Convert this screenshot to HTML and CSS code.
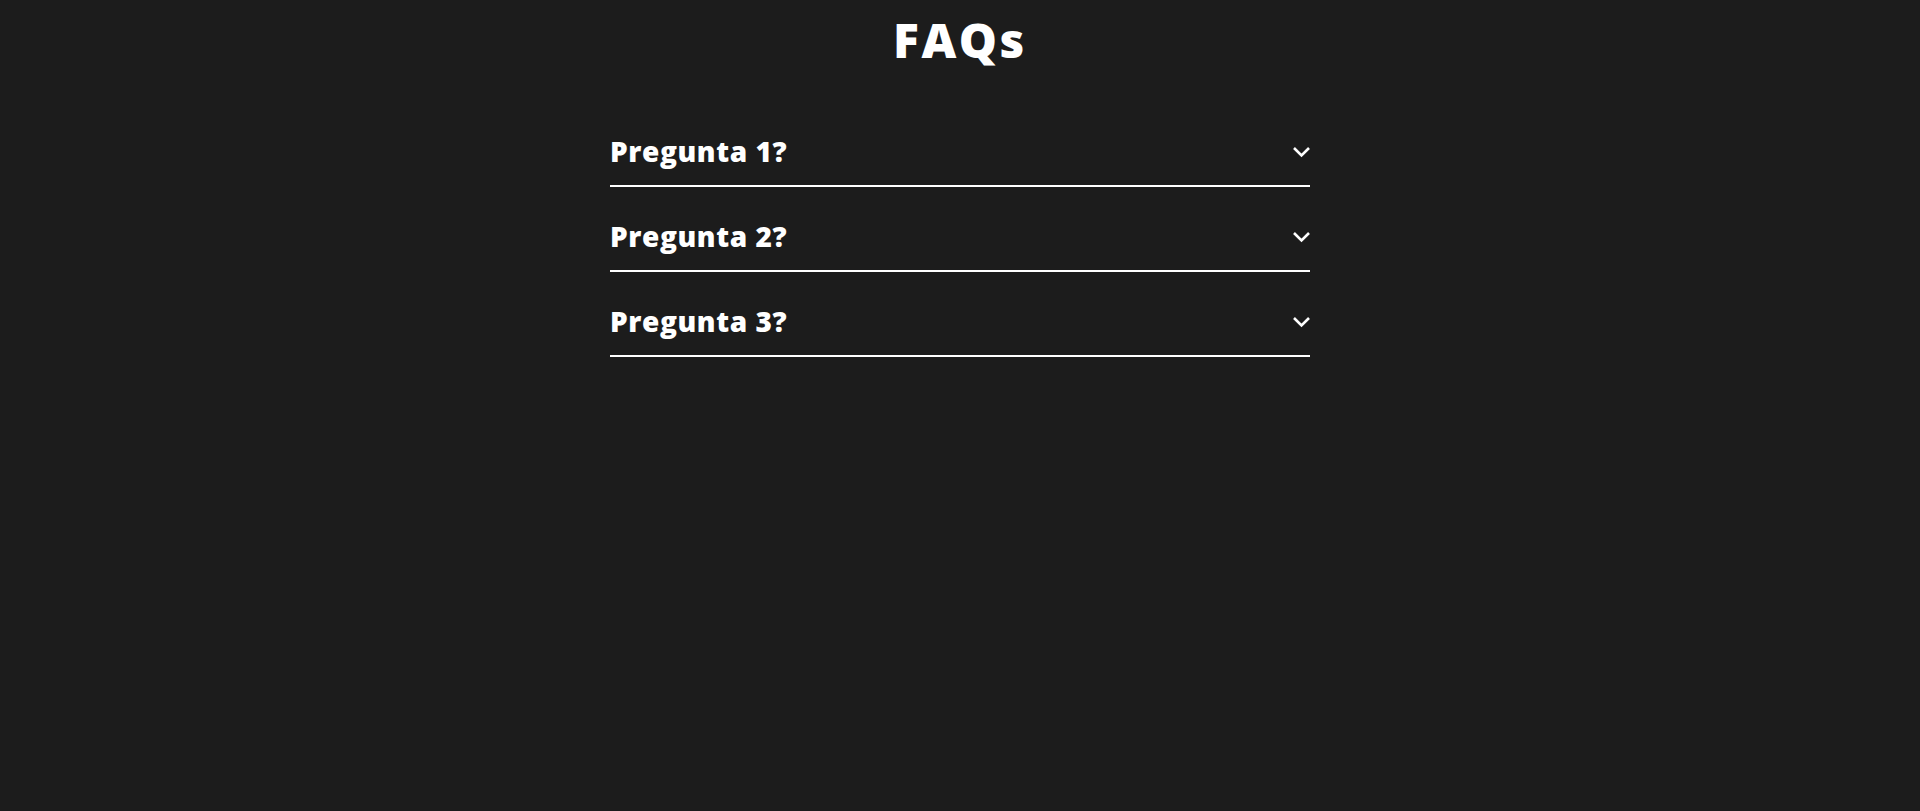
FILE: index.html
```html
<!DOCTYPE html>
<html lang="es">
<head>
<meta charset="utf-8">
<title>FAQs</title>
<link rel="stylesheet" href="styles.css">
</head>
<body>
<main class="faq">
  <h1 class="faq-title">FAQs</h1>
  <div class="faq-list">
    <div class="faq-item">
      <span class="faq-question">Pregunta 1?</span>
      <svg class="faq-chevron" viewBox="0 0 18 12" width="18" height="12"><path d="M2 2 L9.5 9.5 L17 2" fill="none" stroke="#fff" stroke-width="2.6"/></svg>
    </div>
    <div class="faq-item">
      <span class="faq-question">Pregunta 2?</span>
      <svg class="faq-chevron" viewBox="0 0 18 12" width="18" height="12"><path d="M2 2 L9.5 9.5 L17 2" fill="none" stroke="#fff" stroke-width="2.6"/></svg>
    </div>
    <div class="faq-item">
      <span class="faq-question">Pregunta 3?</span>
      <svg class="faq-chevron" viewBox="0 0 18 12" width="18" height="12"><path d="M2 2 L9.5 9.5 L17 2" fill="none" stroke="#fff" stroke-width="2.6"/></svg>
    </div>
  </div>
</main>
</body>
</html>
```

FILE: styles.css
```css
html, body {
  margin: 0;
  padding: 0;
  background: #1c1c1c;
  min-height: 100%;
}
body {
  font-family: "Open Sans", "Liberation Sans", sans-serif;
  color: #ffffff;
}
.faq {
  width: 700px;
  margin: 0 auto;
}
.faq-title {
  margin: 0;
  padding-top: 12px;
  font-size: 48px;
  line-height: 56px;
  font-weight: 800;
  letter-spacing: 2.5px;
  text-align: center;
}
.faq-list {
  margin-top: 34px;
}
.faq-item {
  display: flex;
  align-items: center;
  justify-content: space-between;
  height: 83px;
  padding: 0;
  border-bottom: 2px solid #ffffff;
}
.faq-question {
  font-size: 28px;
  font-weight: 800;
  letter-spacing: 0.6px;
  line-height: 36px;
  padding-top: 14px;
}
.faq-chevron {
  display: block;
  margin-top: 16px;
}
```
